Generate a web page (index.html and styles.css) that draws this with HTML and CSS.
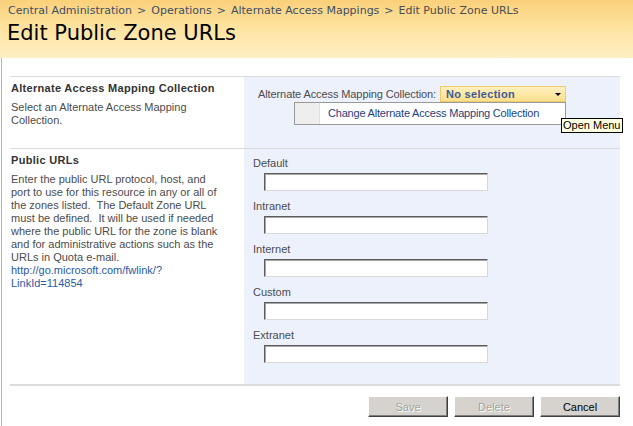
FILE: index.html
```html
<!DOCTYPE html>
<html>
<head>
<meta charset="utf-8">
<link rel="stylesheet" href="styles.css">
</head>
<body>
<div class="titlearea">
  <div class="crumbs"><a href="#">Central Administration</a><span class="sep">&gt;</span><a href="#">Operations</a><span class="sep">&gt;</span><a href="#">Alternate Access Mappings</a><span class="sep">&gt;</span><span class="current">Edit Public Zone URLs</span></div>
  <h1 class="pagetitle">Edit Public Zone URLs</h1>
</div>
<div class="page">
  <div class="sections">
    <div class="sec sec-aam">
      <div class="desc">
        <h2 class="sec-title">Alternate Access Mapping Collection</h2>
        <p class="sec-text">Select an Alternate Access Mapping Collection.</p>
      </div>
      <div class="ctrl">
        <div class="pick">
          <span class="pick-label">Alternate Access Mapping Collection:</span>
          <div class="dropdown"><span class="dd-text">No selection</span><span class="dd-arrow"></span></div>
        </div>
        <div class="menu">
          <div class="menu-icon"></div>
          <div class="menu-item">Change Alternate Access Mapping Collection</div>
        </div>
        <div class="tooltip">Open Menu</div>
      </div>
    </div>
    <div class="sec sec-urls">
      <div class="desc">
        <h2 class="sec-title">Public URLs</h2>
        <p class="sec-text">Enter the public URL protocol, host, and port to use for this resource in any or all of the zones listed.&nbsp; The Default Zone URL must be defined.&nbsp; It will be used if needed where the public URL for the zone is blank and for administrative actions such as the URLs in Quota e-mail. <a class="sec-link" href="#">http://go.microsoft.com/fwlink/?<br>LinkId=114854</a></p>
      </div>
      <div class="ctrl fields">
        <label class="field"><span class="field-label">Default</span><input class="field-input" type="text"></label>
        <label class="field"><span class="field-label">Intranet</span><input class="field-input" type="text"></label>
        <label class="field"><span class="field-label">Internet</span><input class="field-input" type="text"></label>
        <label class="field"><span class="field-label">Custom</span><input class="field-input" type="text"></label>
        <label class="field"><span class="field-label">Extranet</span><input class="field-input" type="text"></label>
      </div>
    </div>
  </div>
  <div class="buttons">
    <button class="btn" disabled>Save</button>
    <button class="btn" disabled>Delete</button>
    <button class="btn">Cancel</button>
  </div>
</div>
</body>
</html>
```
FILE: styles.css
```css
html, body {
  margin: 0;
  padding: 0;
  background: #ffffff;
}
body {
  width: 633px;
  height: 426px;
  overflow: hidden;
  font-family: "Liberation Sans", Arial, sans-serif;
  font-size: 11px;
  color: #4c4c4c;
}
.titlearea {
  height: 58px;
  box-sizing: border-box;
  padding: 4px 0 0 8px;
  background: linear-gradient(to bottom, #fbd07a 0%, #fde29e 45%, #fef0c4 100%);
}
.crumbs {
  font-family: "DejaVu Sans", Verdana, sans-serif;
  font-size: 11px;
  line-height: 14px;
  color: #4d4d4d;
  white-space: nowrap;
}
.crumbs a {
  color: #3b4f65;
  text-decoration: none;
}
.crumbs .sep {
  margin: 0 5px;
  color: #3b4f65;
}
.crumbs .current {
  color: #4d4d4d;
}
.pagetitle {
  margin: 1px 0 0 -1px;
  font-family: "DejaVu Sans", Verdana, sans-serif;
  font-weight: normal;
  font-size: 21px;
  line-height: 28px;
  color: #000000;
}
.page {
  margin-left: 1px;
  border-left: 1px solid #b5b5b5;
  height: 368px;
  box-sizing: border-box;
  padding: 18px 0 0 8px;
}
.sections {
  width: 610px;
  border-bottom: 2px solid #dcdcdc;
}
.sec {
  display: grid;
  grid-template-columns: 234px 376px;
  border-top: 1px solid #dcdcdc;
}
.sec-aam {
  height: 71px;
}
.sec-urls {
  height: 235px;
}
.desc {
  padding: 5px 25px 0 1px;
}
.sec-title {
  margin: 0 0 6px 0;
  font-size: 11px;
  line-height: 13px;
  font-weight: bold;
  letter-spacing: 0.3px;
  color: #333333;
}
.sec-text {
  margin: 0;
  line-height: 13px;
  color: #4c4c4c;
}
.sec-link {
  color: #2a5aa6;
  text-decoration: none;
}
.ctrl {
  background: #edf1fc;
  position: relative;
}
.pick {
  display: flex;
  align-items: center;
  padding: 9px 0 0 14px;
  height: 16px;
}
.pick-label {
  width: 182px;
  white-space: nowrap;
  letter-spacing: -0.1px;
  color: #4c4c4c;
}
.dropdown {
  width: 126px;
  height: 16px;
  box-sizing: border-box;
  border: 1px solid #f0c96c;
  background: linear-gradient(to bottom, #fdf0c0 0%, #fbe08c 100%);
  display: flex;
  align-items: center;
  padding-left: 5px;
  position: relative;
}
.dd-text {
  font-weight: bold;
  color: #3c5a96;
  letter-spacing: 0.3px;
}
.dd-arrow {
  position: absolute;
  right: 4px;
  top: 6px;
  width: 0;
  height: 0;
  border-left: 3px solid transparent;
  border-right: 3px solid transparent;
  border-top: 3px solid #000000;
}
.menu {
  position: absolute;
  left: 50px;
  top: 25px;
  width: 272px;
  height: 23px;
  box-sizing: border-box;
  border: 1px solid #9a9a9a;
  background: #ffffff;
  display: flex;
}
.menu-icon {
  width: 24px;
  background: #eeeeee;
  border-right: 1px solid #e0e0e0;
}
.menu-item {
  padding-left: 8px;
  line-height: 21px;
  color: #1f3f7f;
  letter-spacing: -0.2px;
  white-space: nowrap;
}
.tooltip {
  position: absolute;
  left: 317px;
  top: 41px;
  width: 62px;
  height: 15px;
  box-sizing: border-box;
  border: 1px solid #000000;
  background: #ffffe1;
  color: #000000;
  line-height: 13px;
  padding-left: 1px;
  white-space: nowrap;
}
.fields {
  padding: 8px 0 0 9px;
}
.field {
  display: flex;
  flex-direction: column;
  align-items: flex-start;
  height: 43px;
}
.field-label {
  line-height: 13px;
  color: #4c4c4c;
}
.field-input {
  margin: 3px 0 0 11px;
  width: 224px;
  height: 18px;
  box-sizing: border-box;
  border: 1px solid;
  border-color: #5c5c5c #d8d8d8 #d8d8d8 #5c5c5c;
  box-shadow: inset 1px 1px 0 #a8a8a8;
  background: #ffffff;
  padding: 0 2px;
  font-family: "Liberation Sans", Arial, sans-serif;
  font-size: 11px;
}
.buttons {
  width: 610px;
  display: flex;
  justify-content: flex-end;
  gap: 6px;
  margin-top: 10px;
}
.btn {
  width: 80px;
  height: 21px;
  box-sizing: border-box;
  margin: 0;
  padding: 0;
  font-family: "Liberation Sans", Arial, sans-serif;
  font-size: 11px;
  color: #000000;
  background: #d6d3ce;
  border: 1px solid;
  border-color: #ffffff #404040 #404040 #ffffff;
  box-shadow: inset -1px -1px 0 #808080;
}
.btn:disabled {
  color: #a4a29c;
  text-shadow: 1px 1px 0 #ffffff;
}
```
